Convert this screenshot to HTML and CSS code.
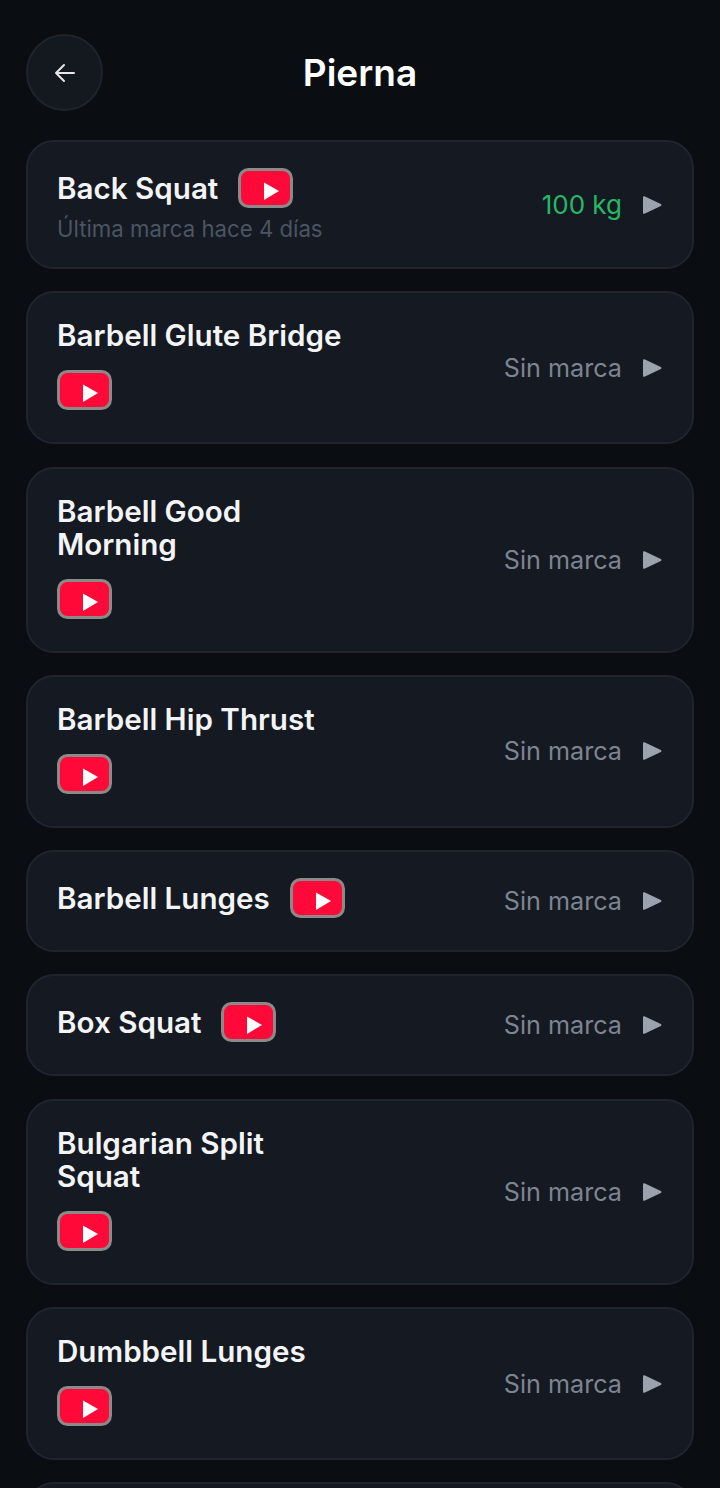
FILE: index.html
```html
<!DOCTYPE html>
<html lang="es">
<head>
  <meta charset="UTF-8">
  <title>Pierna</title>
  <link rel="stylesheet" href="styles.css">
</head>
<body>
  <svg class="defs" width="0" height="0">
    <symbol id="yt" viewBox="0 0 55 40">
      <rect x="1.5" y="1.5" width="52" height="37" rx="9" fill="#ff0a38" stroke="#8a8a8a" stroke-width="3"/>
      <path d="M26 14.5 L26 32 L41 23 Z" fill="#fff"/>
    </symbol>
    <symbol id="tri" viewBox="0 0 20 20">
      <path d="M2 2.2 L18.4 10 L2 17.8 Z" fill="#9ca3af" stroke="#9ca3af" stroke-width="2" stroke-linejoin="round"/>
    </symbol>
  </svg>

  <header class="top">
    <button class="back">
      <svg width="28" height="28" viewBox="0 0 28 28" fill="none" stroke="#e5e7eb" stroke-width="2" stroke-linecap="round" stroke-linejoin="round">
        <path d="M23 14 H5 M13 6 L5 14 L13 22"/>
      </svg>
    </button>
    <h1>Pierna</h1>
    <div class="spacer"></div>
  </header>

  <main class="list">
    <div class="card">
      <div class="left">
        <div class="name-row">
          <span class="name">Back Squat</span>
          <svg class="yt"><use href="#yt"/></svg>
        </div>
        <p class="sub">Última marca hace 4 días</p>
      </div>
      <div class="right">
        <span class="mark mark-ok">100 kg</span>
        <svg class="tri"><use href="#tri"/></svg>
      </div>
    </div>

    <div class="card">
      <div class="left">
        <div class="name-row">
          <span class="name">Barbell Glute Bridge</span>
          <svg class="yt"><use href="#yt"/></svg>
        </div>
      </div>
      <div class="right">
        <span class="mark">Sin marca</span>
        <svg class="tri"><use href="#tri"/></svg>
      </div>
    </div>

    <div class="card">
      <div class="left">
        <div class="name-row">
          <span class="name">Barbell Good Morning</span>
          <svg class="yt"><use href="#yt"/></svg>
        </div>
      </div>
      <div class="right">
        <span class="mark">Sin marca</span>
        <svg class="tri"><use href="#tri"/></svg>
      </div>
    </div>

    <div class="card">
      <div class="left">
        <div class="name-row">
          <span class="name">Barbell Hip Thrust</span>
          <svg class="yt"><use href="#yt"/></svg>
        </div>
      </div>
      <div class="right">
        <span class="mark">Sin marca</span>
        <svg class="tri"><use href="#tri"/></svg>
      </div>
    </div>

    <div class="card">
      <div class="left">
        <div class="name-row">
          <span class="name">Barbell Lunges</span>
          <svg class="yt"><use href="#yt"/></svg>
        </div>
      </div>
      <div class="right">
        <span class="mark">Sin marca</span>
        <svg class="tri"><use href="#tri"/></svg>
      </div>
    </div>

    <div class="card">
      <div class="left">
        <div class="name-row">
          <span class="name">Box Squat</span>
          <svg class="yt"><use href="#yt"/></svg>
        </div>
      </div>
      <div class="right">
        <span class="mark">Sin marca</span>
        <svg class="tri"><use href="#tri"/></svg>
      </div>
    </div>

    <div class="card">
      <div class="left">
        <div class="name-row">
          <span class="name">Bulgarian Split Squat</span>
          <svg class="yt"><use href="#yt"/></svg>
        </div>
      </div>
      <div class="right">
        <span class="mark">Sin marca</span>
        <svg class="tri"><use href="#tri"/></svg>
      </div>
    </div>

    <div class="card">
      <div class="left">
        <div class="name-row">
          <span class="name">Dumbbell Lunges</span>
          <svg class="yt"><use href="#yt"/></svg>
        </div>
      </div>
      <div class="right">
        <span class="mark">Sin marca</span>
        <svg class="tri"><use href="#tri"/></svg>
      </div>
    </div>

    <div class="card card-next"></div>
  </main>
</body>
</html>
```

FILE: styles.css
```css
html, body {
  overflow: hidden;
}

body {
  margin: 0;
  padding: 34px 26px 0;
  background: #0a0d12;
  color: #f9fafb;
  font-family: Inter, "Liberation Sans", sans-serif;
}

.defs {
  position: absolute;
}

.top {
  display: flex;
  align-items: center;
  justify-content: space-between;
  margin-bottom: 29px;
}

.back {
  width: 77px;
  height: 77px;
  display: flex;
  align-items: center;
  justify-content: center;
  padding: 0;
  background: #14181f;
  border: 2px solid #1e232c;
  border-radius: 50%;
}

h1 {
  margin: 0;
  font-size: 37px;
  font-weight: 600;
  line-height: 77px;
  color: #fff;
}

.spacer {
  width: 77px;
}

.list {
  display: flex;
  flex-direction: column;
  gap: 22.3px;
}

.card {
  display: flex;
  align-items: center;
  justify-content: space-between;
  padding: 29px 30px 29px 29px;
  background: #151921;
  border: 2px solid #1f242e;
  border-radius: 28px;
}

.card-next {
  height: 100px;
}

.left {
  width: 290px;
  margin: -3px 0 3px;
}

.name-row {
  display: flex;
  flex-wrap: wrap;
  align-items: center;
  column-gap: 20px;
  row-gap: 18px;
}

.name {
  font-size: 29.6px;
  font-weight: 600;
  line-height: 33px;
  color: #f3f4f6;
}

.yt {
  width: 55px;
  height: 40px;
}

.sub {
  margin: 7px 0 -7px;
  font-size: 22.2px;
  line-height: 27px;
  color: #4b5563;
}

.right {
  display: flex;
  align-items: center;
  gap: 20px;
}

.mark {
  font-size: 25.2px;
  color: #7d8592;
}

.mark-ok {
  font-size: 26px;
  color: #27b866;
}

.tri {
  width: 20px;
  height: 20px;
}
```
